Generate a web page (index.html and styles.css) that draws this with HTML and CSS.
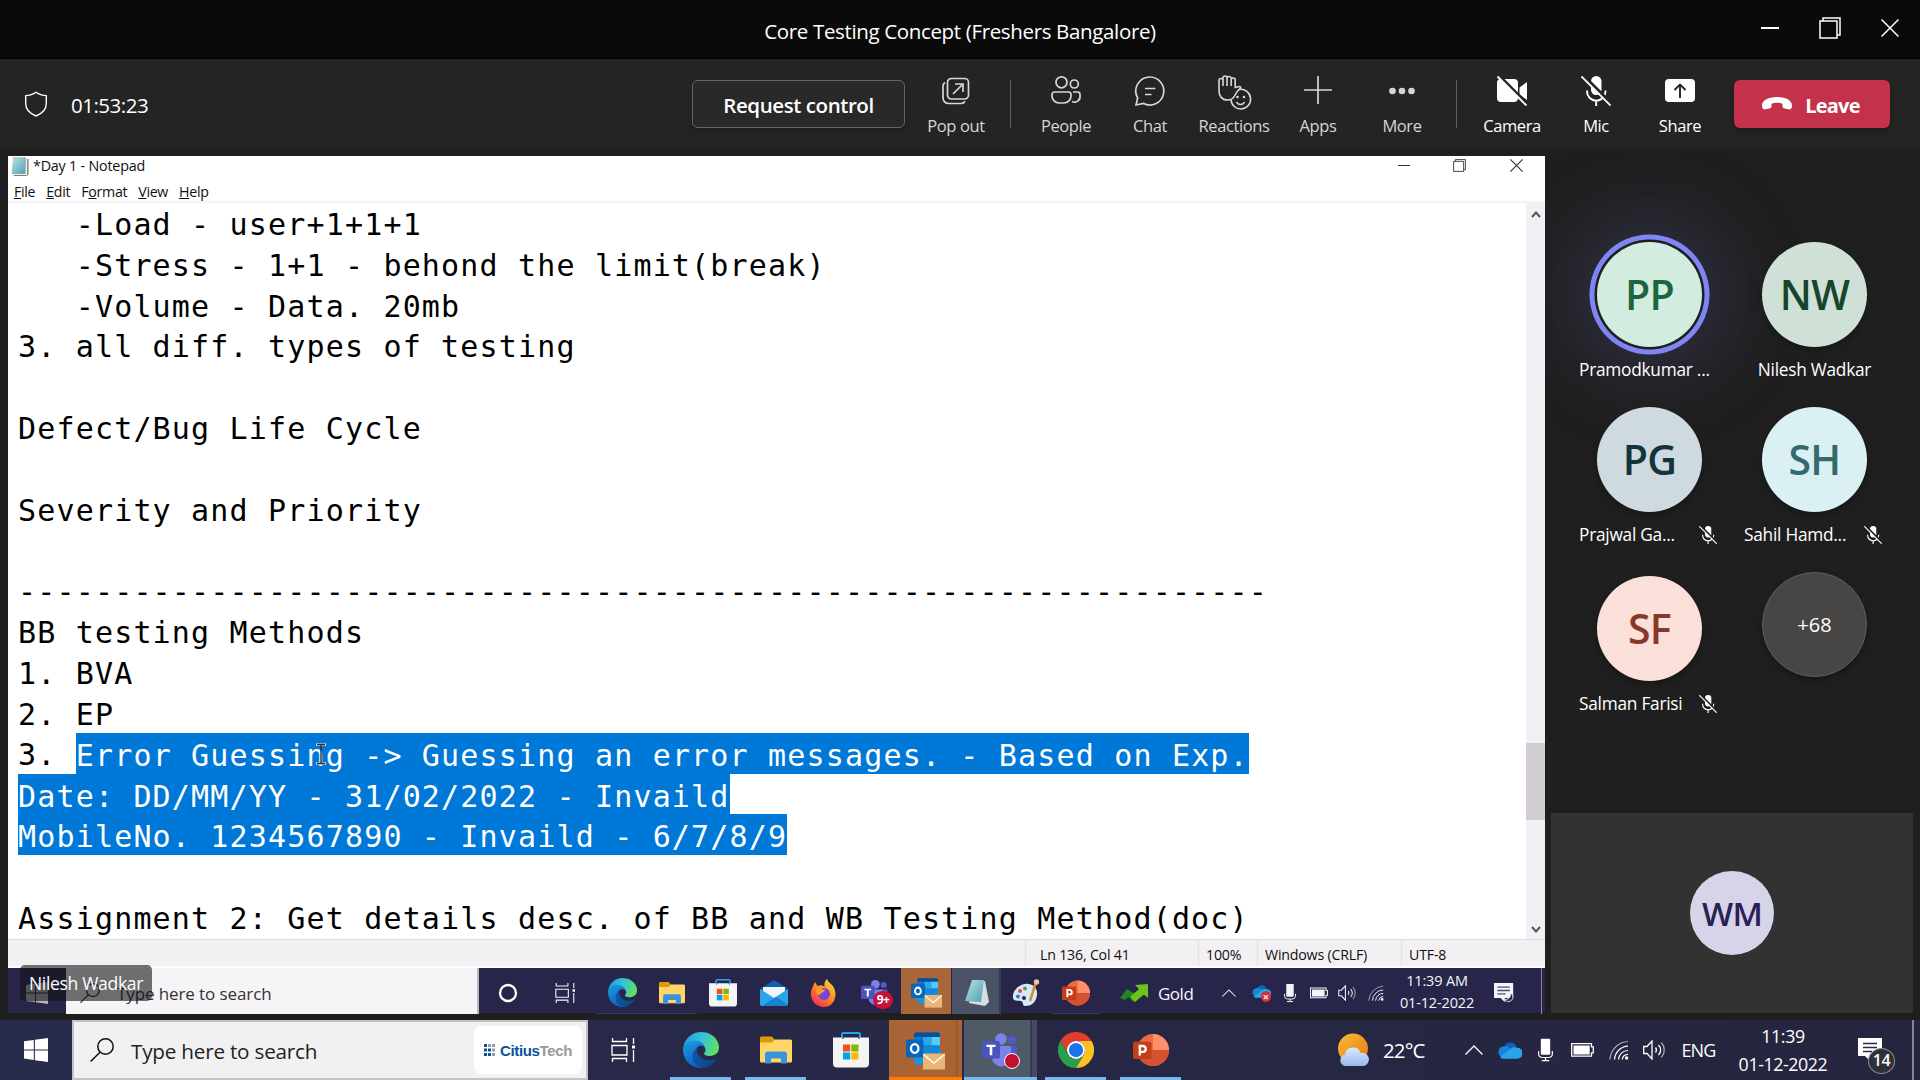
FILE: index.html
```html
<!DOCTYPE html>
<html lang="en">
<head>
<meta charset="utf-8">
<title>Core Testing Concept (Freshers Bangalore)</title>
<link rel="stylesheet" href="styles.css">
</head>
<body>
<svg class="defs" aria-hidden="true">
  <defs>
    <linearGradient id="g-edge-top" x1="0" y1="0.3" x2="1" y2="0.6"><stop offset="0" stop-color="#1f9fe0"/><stop offset=".5" stop-color="#36c5d6"/><stop offset="1" stop-color="#62e05a"/></linearGradient>
    <linearGradient id="g-edge-mid" x1="0" y1="0" x2="0.4" y2="1"><stop offset="0" stop-color="#1ea0e6"/><stop offset="1" stop-color="#0b62c0"/></linearGradient>
    <linearGradient id="g-edge-low" x1="0" y1="0" x2="1" y2="1"><stop offset="0" stop-color="#0f5bb0"/><stop offset="1" stop-color="#0b4687"/></linearGradient>
    <linearGradient id="g-sun" x1="0" y1="0" x2="1" y2="1"><stop offset="0" stop-color="#f6bf35"/><stop offset="1" stop-color="#ee7414"/></linearGradient>
    <linearGradient id="g-cloud" x1="0" y1="0" x2="0" y2="1"><stop offset="0" stop-color="#dbe8fb"/><stop offset="1" stop-color="#97b9f0"/></linearGradient>
    <linearGradient id="g-fox" x1="0.9" y1="0" x2="0.2" y2="1"><stop offset="0" stop-color="#ffdd3c"/><stop offset=".5" stop-color="#ff8a1e"/><stop offset="1" stop-color="#f0265c"/></linearGradient>
    <linearGradient id="g-note" x1="0" y1="0" x2="1" y2="1"><stop offset="0" stop-color="#b9e3ea"/><stop offset="1" stop-color="#4f9fae"/></linearGradient>
  </defs>
  <symbol id="edge" viewBox="0 0 256 256">
    <path fill="url(#g-edge-low)" d="M231 190.5c-3.4 1.8-6.9 3.4-10.5 4.7a101.1 101.1 0 0 1-35.5 6.4c-46.8 0-87.5-32.2-87.5-73.5a31.5 31.5 0 0 1 16.4-27.3c-42.3 1.8-53.2 45.9-53.2 71.7 0 73 67.3 80.5 81.8 80.5 7.8 0 19.6-2.3 26.6-4.5l1.3-.4a128.3 128.3 0 0 0 66.6-52.8 4 4 0 0 0-6-5.8z"/>
    <path fill="url(#g-edge-mid)" d="M105.7 241.5a79.2 79.2 0 0 1-22.7-21.3 80.7 80.7 0 0 1 29.5-120c3.1-1.5 8.5-4.1 15.6-4a32.4 32.4 0 0 1 25.7 13 31.9 31.9 0 0 1 6.3 18.7c0-.2 24.5-79.6-80-79.6-43.9 0-80 41.7-80 78.2a130.2 130.2 0 0 0 12.1 56 128 128 0 0 0 156.4 67 75.5 75.5 0 0 1-62.8-8z"/>
    <path fill="url(#g-edge-top)" d="M152.3 148.9c-.8 1-3.3 2.5-3.3 5.6 0 2.6 1.7 5.2 4.8 7.3 14.4 10 41.5 8.7 41.5 8.7 10.7 0 21.1-2.9 30.3-8.3A61.4 61.4 0 0 0 256 109.1c.3-22.4-8-37.3-11.3-44C223.5 23.9 177.7 0 128 0A128 128 0 0 0 0 126.2c.5-36.5 36.8-66 80-66 3.5 0 23.5.3 42 10 16.3 8.6 24.9 19 30.8 29.2 6.2 10.7 7.3 24.1 7.3 29.5 0 5.3-2.7 13.3-7.8 19.9z"/>
  </symbol>
  <symbol id="explorer" viewBox="0 0 32 27">
    <path fill="#dd9a09" d="M0 1.500a1.500 1.500 0 0 1 1.500-1.500H12l2.500 3V8H0z"/>
    <path fill="#ffd567" d="M0 6h12l2.500-3H30.500A1.500 1.500 0 0 1 32 4.500v20a1.500 1.500 0 0 1-1.500 1.500h-29A1.500 1.500 0 0 1 0 24.500z"/>
    <path fill="#3a94dc" d="M5 27V18a3 3 0 0 1 3-3H24a3 3 0 0 1 3 3v9h-6v-5H11v5z"/>
  </symbol>
  <symbol id="store" viewBox="0 0 36 36">
    <path fill="none" stroke="#1fa8f0" stroke-width="1.900" d="M9 7V2.500A1.500 1.500 0 0 1 10.500 1h15A1.500 1.500 0 0 1 27 2.500V7"/>
    <path fill="#f4f4f4" d="M0 5.500H9V7h1.500V5.500h15V7H27V5.500h9V31.500a4 4 0 0 1-4 4H4a4 4 0 0 1-4-4z"/>
    <path fill="#f25022" d="M10 12.500h7.200v7H10z"/><path fill="#7fba00" d="M18.300 12.500h7.200v7h-7.200z"/>
    <path fill="#00a4ef" d="M10 20.500h7.200v7H10z"/><path fill="#ffb900" d="M18.300 20.500h7.200v7h-7.200z"/>
  </symbol>
  <symbol id="outlook" viewBox="0 0 39 38">
    <rect x="8" y="1" width="26" height="23" rx="2" fill="#0f78d0"/>
    <path fill="#0a4f96" d="M10 1h22a2 2 0 0 1 2 2v2.500H8V3a2 2 0 0 1 2-2z"/>
    <path fill="#29a8ea" d="M17 5.500h8.500V14H17z"/><path fill="#54cdf6" d="M25.500 5.500H34V14h-8.500z"/>
    <path fill="#1388d8" d="M17 14h17v9H17z"/>
    <path fill="#1b94e0" d="M8 20l13 8 14-9v12a2 2 0 0 1-2 2H10a2 2 0 0 1-2-2z"/>
    <rect x="0" y="8" width="17.500" height="18" rx="1.800" fill="#0a66bb"/>
    <ellipse cx="8.700" cy="17" rx="3.700" ry="4.300" fill="none" stroke="#fff" stroke-width="2.300"/>
    <path fill="#e9b677" d="M17 22h22v16H17z"/><path fill="none" stroke="#fff" stroke-width="1.400" d="M17.500 23l10.500 8.500L38.500 23"/>
  </symbol>
  <symbol id="teams" viewBox="0 0 37 35">
    <circle cx="19" cy="6" r="5.800" fill="#7b83eb"/><circle cx="30" cy="7" r="4" fill="#5059c9"/>
    <path fill="#5059c9" d="M25 13h8.500A1.500 1.500 0 0 1 35 14.500V23a6 6 0 0 1-10 4z"/>
    <path fill="#7b83eb" d="M10 13h17.500A1.500 1.500 0 0 1 29 14.500V24a9.500 9.500 0 0 1-19 0z"/>
    <rect y="8" width="18" height="17.500" rx="1.800" fill="#4b53bc"/>
    <path fill="#fff" d="M4.500 11.800h9v2.200h-3.200v8.200H7.700V14H4.500z"/>
  </symbol>
  <symbol id="ppt" viewBox="0 0 36 32">
    <circle cx="20" cy="16" r="16" fill="#ed6c47"/><path fill="#ff8f6b" d="M20 0a16 16 0 0 1 16 16H20z"/><path fill="#d35230" d="M4 16h32a16 16 0 0 1-32 0z"/>
    <rect y="7.500" width="18.500" height="17.500" rx="1.800" fill="#c43e1c"/>
    <path fill="none" stroke="#fff" stroke-width="2.300" d="M6.800 21.500V12h3a2.900 2.900 0 0 1 0 5.900h-3"/>
  </symbol>
  <symbol id="chrome" viewBox="0 0 48 48">
    <path fill="#e33b2e" d="M24 12h20.800A24 24 0 0 0 3.200 12l10.400 18A12 12 0 0 1 24 12z"/>
    <path fill="#fcc31e" d="M34.400 30L24 48a24 24 0 0 0 20.800-36H24a12 12 0 0 1 10.400 18z"/>
    <path fill="#2b9f48" d="M13.600 30L3.200 12A24 24 0 0 0 24 48l10.400-18a12 12 0 0 1-20.800 0z"/>
    <circle cx="24" cy="24" r="12" fill="#fff"/><circle cx="24" cy="24" r="9.500" fill="#1a73e8"/>
  </symbol>
  <symbol id="windows" viewBox="0 0 24 24"><path fill="currentColor" d="M0 3.300L9.800 2v9.400H0zM10.900 1.800L24 0v11.400H10.900zM0 12.500h9.800v9.400L0 20.600zM10.900 12.500H24V24l-13.100-1.800z"/></symbol>
  <symbol id="lens" viewBox="0 0 24 24"><g fill="none" stroke="currentColor" stroke-width="1.500"><circle cx="15.500" cy="8.500" r="7.700"/><path d="M10.200 14L.6 23.500"/></g></symbol>
  <symbol id="taskview" viewBox="0 0 24 24"><g fill="none" stroke="currentColor" stroke-width="1.300"><path d="M1 7.500h15v9.500H1z"/><path d="M1.500 0v3.500h14V0M1.500 24v-3.500h14V24M22.500 0v6M22.500 12v12"/></g><path fill="currentColor" d="M21 7.500h3v3h-3z"/></symbol>
  <symbol id="chevron-up" viewBox="0 0 18 10"><path fill="none" stroke="currentColor" stroke-width="1.300" d="M.5 9.500L9 1l8.500 8.500"/></symbol>
  <symbol id="tray-mic" viewBox="0 0 16 24"><rect x="3" width="10" height="17" rx="1" fill="currentColor"/><path fill="none" stroke="currentColor" stroke-width="1.300" d="M.7 13v3.500A4 4 0 0 0 4.700 20h6.600a4 4 0 0 0 4-3.500V13M8 20v3.400M4 23.400h8"/></symbol>
  <symbol id="battery" viewBox="0 0 23 14"><path fill="none" stroke="currentColor" stroke-width="1.300" d="M.7.7h19.800v3.200h1.800v6h-1.800v3.200H.7z"/><path fill="currentColor" d="M2.500 2.500h16.200v9H2.500z"/></symbol>
  <symbol id="wifi" viewBox="0 0 20 20"><g fill="none" stroke="currentColor" stroke-width="1.200"><path d="M1 19.500A19 19 0 0 1 19 1.500" opacity=".6"/><path d="M5.500 19.500A14 14 0 0 1 19 6.200M9.500 19.500A9.500 9.500 0 0 1 19 10.500M13.200 19.500A6 6 0 0 1 19 14.300"/></g><circle cx="17.600" cy="18" r="1.700" fill="currentColor"/></symbol>
  <symbol id="speaker" viewBox="0 0 22 20"><g fill="none" stroke="currentColor" stroke-width="1.300"><path d="M.7 6.500H4l5-5.500v18l-5-5.500H.7z"/><path d="M12.500 7.500a4 4 0 0 1 0 5M15.500 5a7 7 0 0 1 0 10"/><path d="M18.300 2.500a11 11 0 0 1 0 15" opacity=".6"/></g></symbol>
  <symbol id="cloud" viewBox="0 0 24 18"><path fill="#0a64b8" d="M7 5a6.200 6.200 0 0 1 11.500 1L12 10z"/><path fill="#1485d8" d="M5 5.500c3-1.500 5 0 7.500 1.800L4 16a5.500 5.500 0 0 1 1-10.500z"/><path fill="#28a4ea" d="M12 8c3-2.300 6-1.800 7.500-1.200a5.500 5.500 0 0 1-.5 11H5a5 5 0 0 1-3-1.500z"/></symbol>
  <symbol id="note-bubble" viewBox="0 0 24 24"><path fill="currentColor" d="M0 0h24v18H13v6l-6-6H0z"/><path stroke="#27284a" stroke-width="1.500" d="M5 5.500h14M5 9.500h14M5 13.500h9"/></symbol>
  <symbol id="mic-off" viewBox="0 0 30 30">
    <rect x="10" y="0" width="10.500" height="19" rx="5.200" fill="currentColor"/>
    <path fill="none" stroke="currentColor" stroke-width="1.900" d="M6 14.500v1a9 9 0 0 0 18.500 0v-1M15.200 24.500V30"/>
    <path stroke="var(--cut)" stroke-width="3" d="M1.500-1.500L31.500 28.500"/><path stroke="currentColor" stroke-width="1.900" d="M.5.500l29 29"/>
  </symbol>
  <symbol id="restore" viewBox="0 0 22 22"><path fill="none" stroke="currentColor" stroke-width="1.500" d="M1 4h17v17H1zM4 4V1h17v17h-3"/></symbol>
  <symbol id="close" viewBox="0 0 18 18"><path stroke="currentColor" stroke-width="1.500" d="M.5.500l17 17M17.500.500l-17 17"/></symbol>
</svg>

<header class="titlebar">
  <h1 class="titlebar-text">Core Testing Concept (Freshers Bangalore)</h1>
  <div class="titlebar-buttons">
    <span class="dash"></span>
    <svg class="i-restore"><use href="#restore"/></svg>
    <svg class="i-close"><use href="#close"/></svg>
  </div>
</header>

<nav class="toolbar">
  <div class="timer">
    <svg class="shield" viewBox="0 0 24 26"><path fill="none" stroke="#fff" stroke-width="1.400" d="M12 1.200c3 2.300 6.500 3.300 10.300 3.400v8c0 6-3.600 9.900-10.300 12.400C5.300 22.500 1.700 18.600 1.700 12.600v-8C5.500 4.500 9 3.500 12 1.200z"/></svg>
    <span class="timer-text">01:53:23</span>
  </div>
  <button class="request">Request control</button>
  <div class="tool popout">
    <svg viewBox="0 0 30 30"><g fill="none" stroke="currentColor" stroke-width="1.700"><rect x="6.500" y="2.500" width="21" height="20.500" rx="4"/><path d="M4 6.500A4.500 4.500 0 0 0 2 10V22a5.500 5.500 0 0 0 5.500 5.500H20a4.500 4.500 0 0 0 4-2.200M12 18l9.500-9.500M14 8h8v8"/></g></svg>
    <span>Pop out</span>
  </div>
  <span class="rule"></span>
  <div class="tool">
    <svg viewBox="0 0 30 30"><g fill="none" stroke="currentColor" stroke-width="1.700"><circle cx="10.500" cy="6.300" r="5.500"/><circle cx="23.300" cy="8" r="4"/><path d="M3.500 16h14a2.500 2.500 0 0 1 2.500 2.500v1.500a7 7 0 0 1-7 7H8a7 7 0 0 1-7-7v-1.500A2.500 2.500 0 0 1 3.500 16zM22 16h4.500a2.500 2.500 0 0 1 2.500 2.500V20a5.500 5.500 0 0 1-8 5.500"/></g></svg>
    <span>People</span>
  </div>
  <div class="tool">
    <svg viewBox="0 0 30 30"><g fill="none" stroke="currentColor" stroke-width="1.700"><path d="M15 1a14 14 0 1 1-6.500 26.500L1 29l1.700-7A14 14 0 0 1 15 1zM10 12.500h10.500M10 18.500h6.500"/></g></svg>
    <span>Chat</span>
  </div>
  <div class="tool wide-icon">
    <svg viewBox="0 0 34 34"><g fill="none" stroke="currentColor" stroke-width="1.600"><path d="M2 12V6.500a2 2 0 0 1 4 0M6 12V4a2 2 0 0 1 4 0v8M10 4a2.200 2.200 0 0 1 4.200 0v8M14.200 6a2 2 0 0 1 4 0v7.500l4-1c1.500 0 2 1.300.8 2.200-2.500 2-4 4-5.500 7.300-1.500 3-4 4-7 4C5 26 2 22 2 17v-5"/><path d="M22 15.500a9.800 9.800 0 1 1-8 10"/><path d="M19.500 28a4.500 4.500 0 0 0 8 0"/></g><circle cx="20.500" cy="23" r="1.300" fill="currentColor"/><circle cx="27" cy="23" r="1.300" fill="currentColor"/></svg>
    <span>Reactions</span>
  </div>
  <div class="tool">
    <svg viewBox="0 0 30 30"><path stroke="currentColor" stroke-width="1.700" d="M15 0v28M1 14h28"/></svg>
    <span>Apps</span>
  </div>
  <div class="tool">
    <svg viewBox="0 0 30 30"><g fill="currentColor"><circle cx="5.500" cy="15" r="3.300"/><circle cx="15" cy="15" r="3.300"/><circle cx="24.500" cy="15" r="3.300"/></g></svg>
    <span>More</span>
  </div>
  <span class="rule rule-devices"></span>
  <div class="tool bright">
    <svg viewBox="0 0 30 30"><path fill="currentColor" d="M4 3h13a4 4 0 0 1 4 4v15a4 4 0 0 1-4 4H4a4 4 0 0 1-4-4V7a4 4 0 0 1 4-4zM22.500 11.500L30 6v18l-7.500-5.500z"/><path stroke="#242424" stroke-width="3" d="M2-.5L32 29.500"/><path stroke="currentColor" stroke-width="1.900" d="M.5.500l29 29"/></svg>
    <span>Camera</span>
  </div>
  <div class="tool bright">
    <svg><use href="#mic-off"/></svg>
    <span>Mic</span>
  </div>
  <div class="tool bright">
    <svg viewBox="0 0 30 30"><rect x="0" y="3" width="30" height="23" rx="4" fill="currentColor"/><path fill="none" stroke="#242424" stroke-width="1.900" d="M15 22V9M9.500 14L15 8.500l5.500 5.500"/></svg>
    <span>Share</span>
  </div>
  <button class="leave">
    <svg viewBox="0 0 30 13"><path fill="currentColor" d="M15 0c9 0 15 3.500 15 8.500 0 3.200-1.500 4.200-3.700 3.800l-3.500-.7c-1.600-.3-2.300-1-2.300-2.500V6.700c-3.500-1.200-7.500-1.200-11 0v2.400c0 1.500-.7 2.200-2.300 2.500l-3.500.7C1.500 12.700 0 11.700 0 8.500 0 3.500 6 0 15 0z"/></svg>
    <span>Leave</span>
  </button>
</nav>

<main class="stage">
  <section class="shared">
    <div class="np-title">
      <svg class="np-icon" viewBox="0 0 19 20"><path fill="#8a7d68" d="M3 2h15.500v17L16 20H3z"/><path fill="#f4f4f0" d="M3 1.500h14V19H3z"/><path fill="url(#g-note)" d="M2 1h14l-.8 17H.8z"/><path stroke="#5f7f86" stroke-dasharray="1 1" d="M2 .7h14"/></svg>
      <span class="np-name">*Day 1 - Notepad</span>
      <div class="np-buttons">
        <span class="dash"></span>
        <svg class="i-restore"><use href="#restore"/></svg>
        <svg class="i-close"><use href="#close"/></svg>
      </div>
    </div>
    <div class="np-menu"><span><u>F</u>ile</span><span><u>E</u>dit</span><span>F<u>o</u>rmat</span><span><u>V</u>iew</span><span><u>H</u>elp</span></div>
    <div class="np-body">
<pre class="np-text">   -Load - user+1+1+1
   -Stress - 1+1 - behond the limit(break)
   -Volume - Data. 20mb
3. all diff. types of testing

Defect/Bug Life Cycle

Severity and Priority

-----------------------------------------------------------------
BB testing Methods
1. BVA
2. EP
3. <mark>Error Guessing -&gt; Guessing an error messages. - Based on Exp.</mark>
<mark>Date: DD/MM/YY - 31/02/2022 - Invaild</mark>
<mark>MobileNo. 1234567890 - Invaild - 6/7/8/9</mark>

Assignment 2: Get details desc. of BB and WB Testing Method(doc)</pre>
      <svg class="ibeam" viewBox="0 0 12 22"><path fill="none" stroke="#e9d8c8" stroke-width="2.600" d="M1 1.500h10M1 20.500h10"/><path fill="none" stroke="#2b3038" stroke-width="1.400" d="M6 1v20M2 1.500h8M2 20.500h8"/></svg>
      <div class="np-scroll">
        <svg viewBox="0 0 10 7"><path fill="none" stroke="#555" stroke-width="2" d="M1 6l4-4.500L9 6"/></svg>
        <span class="np-thumb"></span>
        <svg viewBox="0 0 10 7"><path fill="none" stroke="#555" stroke-width="2" d="M1 1l4 4.500L9 1"/></svg>
      </div>
    </div>
    <div class="np-status"><span>Ln 136, Col 41</span><span>100%</span><span>Windows (CRLF)</span><span>UTF-8</span></div>
    <div class="bar2">
      <span><svg class="s22 dim"><use href="#windows"/></svg></span>
      <div class="bar2-search"><svg><use href="#lens"/></svg><span>Type here to search</span></div>
      <span><svg class="s20" viewBox="0 0 20 20"><circle cx="10" cy="10" r="8" fill="none" stroke="#fff" stroke-width="2.300"/></svg></span>
      <span><svg class="s20"><use href="#taskview"/></svg></span>
      <span></span>
      <span class="open"><svg class="s29"><use href="#edge"/></svg></span>
      <span class="open"><svg class="s26"><use href="#explorer"/></svg></span>
      <span><svg class="s28"><use href="#store"/></svg></span>
      <span><svg class="s28" viewBox="0 0 28 26"><path fill="#0f5fb0" d="M14 0l14 9v8H0V9z"/><path fill="#f0f4f8" d="M3 7h22v8l-11 6L3 15z"/><path fill="#2aa5ea" d="M0 9l14 9 14-9v15a2 2 0 0 1-2 2H2a2 2 0 0 1-2-2z"/><path fill="#1683d2" d="M2 26l14-9 12 7.500-1.500 1.500z"/></svg></span>
      <span><svg class="s28" viewBox="0 0 28 28"><path fill="url(#g-fox)" d="M17 0c1.500 4 5 5 6.500 8 5 9 0 20-9.500 20C4 28-1.500 18 2 9.500L5 3l2.500 4C10 5.500 13 6 14.500 8c-.5-3 0-6 2.500-8z"/><circle cx="14" cy="15" r="6" fill="#7a43d8"/><path fill="#ff9a20" d="M6 9c5-1 5 2 9 2-1 3-4 2-5 5-3 0-5-3-4-7z"/></svg></span>
      <span class="teams2"><svg class="s28"><use href="#teams"/></svg><b>9+</b></span>
      <span class="orange"><svg class="s31"><use href="#outlook"/></svg></span>
      <span class="active2"><svg class="s28" viewBox="0 0 28 28"><path fill="#d9dde0" d="M10 2h13l4 21-4 4-16-3z"/><path fill="url(#g-note)" d="M10 1h12l-3 22-16-1z"/></svg></span>
      <span><svg class="s28" viewBox="0 0 28 28"><path fill="#d7e8f6" d="M13 5C20 4 26 9 25 16c-1 8-6 11-12 11-3 0-1-4-4-5-4-1-7 1-8-3C0 12 6 6 13 5z"/><path stroke="#d58c3a" stroke-width="2.500" d="M24 3L18 22"/><circle cx="24.500" cy="3" r="2.700" fill="#e8c894"/><circle cx="8" cy="12" r="2" fill="#e04a3a"/><circle cx="13" cy="9.500" r="2" fill="#49a64a"/><circle cx="6" cy="17.500" r="2" fill="#2c7cd8"/><circle cx="12" cy="19" r="2" fill="#27284a"/></svg></span>
      <span class="open"><svg class="s28"><use href="#ppt"/></svg></span>
      <div class="gold"><svg viewBox="0 0 28 18"><path fill="#25851f" d="M0 14L7 5l7 4 4 5-5 4-4-5-4 3z"/><path fill="#6fc41c" d="M10 13L19 5l-4-4 13-1v14l-4-3.500-9 7.500z"/></svg><span>Gold</span></div>
      <span><svg class="w14"><use href="#chevron-up"/></svg></span>
      <span class="cloud2"><svg><use href="#cloud"/></svg><i>×</i></span>
      <span><svg class="w12"><use href="#tray-mic"/></svg></span>
      <span><svg class="w18"><use href="#battery"/></svg></span>
      <span><svg class="w18"><use href="#speaker"/></svg></span>
      <span><svg class="w16"><use href="#wifi"/></svg></span>
      <div class="clock2"><span>11:39 AM</span><span>01-12-2022</span></div>
      <span><svg class="s20" viewBox="0 0 24 24"><path fill="#f4f4fa" d="M0 0h23v18H13v5l-5-5H0z"/><path stroke="#4a4b72" stroke-width="1.600" d="M4 5h15M4 9h15M4 13h10"/><path fill="#27284a" stroke="#f4f4fa" d="M20 12a5.500 5.500 0 1 1-7.500 7.500c4 1.500 8-2.500 7.500-7.500z"/></svg></span>
      <span class="edge-line"></span>
    </div>
    <div class="presenter">Nilesh Wadkar</div>
  </section>

  <aside class="side">
    <div class="people">
      <figure class="person speaking"><div class="avatar pp">PP</div><figcaption><span>Pramodkumar ...</span></figcaption></figure>
      <figure class="person centered"><div class="avatar nw">NW</div><figcaption><span>Nilesh Wadkar</span></figcaption></figure>
      <figure class="person"><div class="avatar pg">PG</div><figcaption><span>Prajwal Ga...</span><svg><use href="#mic-off"/></svg></figcaption></figure>
      <figure class="person"><div class="avatar sh">SH</div><figcaption><span>Sahil Hamd...</span><svg><use href="#mic-off"/></svg></figcaption></figure>
      <figure class="person last"><div class="avatar sf">SF</div><figcaption><span>Salman Farisi</span><svg><use href="#mic-off"/></svg></figcaption></figure>
      <figure class="person"><div class="avatar more">+68</div></figure>
    </div>
    <div class="self"><div class="avatar wm">WM</div></div>
  </aside>
</main>

<footer class="taskbar">
  <span class="start"><svg class="s24"><use href="#windows"/></svg></span>
  <div class="search">
    <svg><use href="#lens"/></svg><span class="search-text">Type here to search</span>
    <div class="citius">
      <svg viewBox="0 0 11 12"><g fill="#0b5197"><path d="M0 0h3v3H0zM0 4.500h3v3H0zM0 9h3v3H0zM4 4.500h3v3H4zM4 9h3v3H4z"/></g><g fill="#9a9da0"><path d="M4 0h3v3H4zM8 0h3v3H8zM8 4.500h3v3H8zM8 9h3v3H8z"/></g></svg>
      <span>Citius<em>Tech</em></span>
    </div>
  </div>
  <span class="tview"><svg class="s24"><use href="#taskview"/></svg></span>
  <span class="app run"><svg class="s36"><use href="#edge"/></svg></span>
  <span class="app run"><svg class="s32"><use href="#explorer"/></svg></span>
  <span class="app"><svg class="s36"><use href="#store"/></svg></span>
  <span class="app alert"><svg class="s39"><use href="#outlook"/></svg></span>
  <span class="app active"><svg class="s37"><use href="#teams"/></svg><b class="rec"></b></span>
  <span class="app run"><svg class="s36"><use href="#chrome"/></svg></span>
  <span class="app run"><svg class="s36"><use href="#ppt"/></svg></span>
  <div class="tray">
    <span><svg class="weather" viewBox="0 0 34 34"><circle cx="16" cy="15.500" r="15" fill="url(#g-sun)"/><path fill="url(#g-cloud)" d="M9 33a5.800 5.800 0 0 1-1-11.500 8 8 0 0 1 15.500-1.500A6.600 6.600 0 0 1 27 33z"/></svg></span>
    <span class="temp">22°C</span>
    <span><svg class="w18"><use href="#chevron-up"/></svg></span>
    <span><svg class="s24"><use href="#cloud"/></svg></span>
    <span><svg class="w15"><use href="#tray-mic"/></svg></span>
    <span><svg class="w23"><use href="#battery"/></svg></span>
    <span><svg class="w20"><use href="#wifi"/></svg></span>
    <span><svg class="w22"><use href="#speaker"/></svg></span>
    <span class="lang">ENG</span>
    <div class="clock"><span>11:39</span><span>01-12-2022</span></div>
    <span class="notif"><svg class="s24"><use href="#note-bubble"/></svg><b>14</b></span>
    <span class="edge-line"></span>
  </div>
</footer>
</body>
</html>
```
FILE: styles.css
```css
* { box-sizing: border-box; }
body {
  margin: 0; width: 1920px; height: 1080px; overflow: hidden;
  display: flex; flex-direction: column;
  background: #1f1f1f; color: #fff;
  font-family: "Open Sans", "Noto Sans", sans-serif;
}
svg { display: block; flex: none; overflow: visible; }
.defs { width: 0; height: 0; }
button { font: inherit; color: inherit; border: 0; padding: 0; }

/* Meeting window title */
.titlebar { height: 59px; flex: none; display: grid; grid-template-columns: 1fr auto 1fr; align-items: center; background: #0a0a0a; border-bottom: 1px solid #000; }
.titlebar-text { grid-column: 2; margin: 3px 0 0; font-size: 20.500px; font-weight: 400; letter-spacing: -.35px; line-height: 28px; white-space: nowrap; }
.titlebar-buttons { justify-self: end; display: flex; align-items: center; padding-right: 21px; margin-top: -3px; }
.dash { width: 18px; height: 2px; background: currentColor; }
.titlebar-buttons .i-restore { width: 22px; height: 22px; margin: 0 40px; }
.titlebar-buttons .i-close { width: 18px; height: 18px; }

/* Meeting toolbar */
.toolbar { height: 90px; flex: none; display: flex; align-items: center; padding: 0 30px 0 24px; background: #242424; }
.timer { display: flex; align-items: center; margin-right: auto; gap: 23px; }
.shield { width: 24px; height: 26px; }
.timer-text { font-size: 20.500px; letter-spacing: -.5px; margin-top: 1px; }
.request { width: 213px; height: 48px; border: 1px solid #666; border-radius: 6px; background: #292929; font-size: 20.500px; font-weight: 600; letter-spacing: -.42px; padding-top: 3px; margin-top: -1px; box-shadow: 0 3px 5px rgba(0,0,0,.2); }
.popout { margin-left: 9px; }
.rule { width: 1px; height: 48px; margin: 0 13px 0 12px; background: #616161; }
.tool { width: 84px; height: 64px; margin-top: 6px; display: flex; flex-direction: column; align-items: center; color: #d6d6d6; font-size: 16.500px; line-height: 22px; letter-spacing: -.4px; --cut: #242424; }
.tool svg { width: 30px; height: 30px; margin: 1px 0 9px; }
.wide-icon svg { width: 34px; height: 34px; margin: -1px 0 7px; }
.bright { color: #fff; }
.leave { width: 156px; height: 48px; margin: -1px 0 0 12px; border-radius: 6px; background: #c4314b; display: flex; align-items: center; justify-content: center; gap: 13px; padding-right: 2px; font-size: 20px; font-weight: 700; letter-spacing: -.8px; box-shadow: 0 3px 5px rgba(0,0,0,.25); }
.leave svg { width: 30px; height: 13px; }
.leave span { padding-top: 3px; }

.stage { height: 871px; flex: none; display: flex; gap: 6px; padding: 7px 7px 7px 8px; }

/* Shared screen */
.shared { position: relative; width: 1537px; display: flex; flex-direction: column; background: #fff; color: #111; }
.np-title { height: 23px; display: flex; align-items: flex-start; padding-left: 3px; font-size: 14.300px; letter-spacing: -.2px; }
.np-icon { width: 18px; height: 19px; margin-top: 1px; }
.np-name { margin: 0 auto 0 4px; line-height: 19px; }
.np-buttons { display: flex; align-items: center; height: 19px; padding-right: 22px; color: #333; }
.np-buttons .dash { width: 12px; height: 1px; }
.np-buttons .i-restore { width: 13px; height: 13px; margin: 0 44px 0 43px; }
.np-buttons .i-close { width: 13px; height: 13px; }
.np-menu { height: 24px; display: flex; gap: 11px; padding: 1px 0 0 6px; border-bottom: 2px solid #f4f4f8; font-size: 14.200px; line-height: 24px; letter-spacing: -.3px; }
.np-body { position: relative; height: 736px; display: flex; justify-content: space-between; overflow: hidden; }
.np-text { margin: 0; padding: 2px 0 0 10px; font: 30px/40.800px "DejaVu Sans Mono", monospace; letter-spacing: 1.170px; color: #000; }
.np-text mark { background: #0078d7; color: #fff; padding: 4.600px 0 1.300px; }
.ibeam { position: absolute; left: 307px; top: 540px; width: 12px; height: 22px; }
.np-scroll { width: 19px; height: 736px; display: flex; flex-direction: column; align-items: center; background: #f3f0f5; padding: 8px 0 6px; }
.np-scroll svg { width: 10px; height: 7px; }
.np-thumb { width: 19px; height: 77px; margin: 525px 0 auto; background: #d1cdd2; }
.np-status { height: 29px; display: grid; grid-template-columns: 173px 59px 144px 144px; justify-content: end; border-top: 1px solid #dedce2; border-bottom: 2px solid #fdfdfd; background: #f2f0f3; font-size: 14.200px; line-height: 29px; letter-spacing: -.2px; }
.np-status span { height: 26px; border-left: 1px solid #e2e0e6; padding-left: 7px; white-space: nowrap; }
.np-status span:first-child { padding-left: 14px; }

.bar2 { height: 45px; display: grid; grid-template-columns: 58px 413px 58px 56px 4px 50px 50px 51px 51px 50px 52px 50px 50px 50px 50px 110px 36px 28px 30px 28px 28px 30px 92px 42px 21px; background: #27264a; color: #f4f4fa; align-items: stretch; }
.bar2 > span { display: flex; align-items: center; justify-content: center; padding-top: 3px; }
.bar2-search { display: flex; align-items: center; padding-left: 14px; background: #f7f4f8; border-right: 2px solid #bbb; color: #333; font-size: 17px; letter-spacing: -.1px; }
.bar2-search svg { width: 20px; height: 20px; margin: 4px 17px 0 0; color: #222; }
.bar2-search span { margin-top: 5px; }
.dim { color: #b4b4bc; }
.s20 { width: 20px; height: 20px; } .s22 { width: 22px; height: 22px; } .s24 { width: 24px; height: 24px; }
.s26 { width: 26px; height: 26px; } .s28 { width: 28px; height: 28px; } .s29 { width: 29px; height: 29px; }
.s31 { width: 31px; height: 31px; } .s32 { width: 32px; height: 32px; } .s36 { width: 36px; height: 36px; }
.s37 { width: 37px; height: 37px; } .s39 { width: 39px; height: 39px; }
.w12 { width: 12px; height: 20px; } .w14 { width: 14px; height: 8px; } .w15 { width: 15px; height: 24px; }
.w16 { width: 16px; height: 16px; } .w18 { width: 18px; height: 16px; } .w20 { width: 20px; height: 20px; }
.w22 { width: 22px; height: 20px; } .w23 { width: 23px; height: 14px; }
.bar2 .open { box-shadow: inset 0 -1px #16496e; }
.bar2 .orange { background: #a96638; }
.bar2 .active2 { background: #4b5268; border-left: 1px solid #27264a; border-right: 2px solid #35395a; }
.teams2 { position: relative; }
.teams2 b { position: absolute; left: 24px; top: 23px; width: 20px; height: 18px; border-radius: 9px; background: #c4123a; color: #fff; font-size: 12px; line-height: 17px; text-align: center; letter-spacing: -.5px; }
.gold { display: flex; align-items: center; gap: 10px; padding: 4px 0 0 19px; font-size: 17px; letter-spacing: -.5px; }
.gold svg { width: 28px; height: 18px; }
.cloud2 { position: relative; }
.cloud2 svg { width: 19px; height: 14px; margin-top: -3px; }
.cloud2 i { position: absolute; left: 14px; top: 23px; width: 10px; height: 11px; border-radius: 50%; background: #d5303c; font: 700 11px/11px "Open Sans", sans-serif; text-align: center; }
.clock2 { display: flex; flex-direction: column; align-items: center; padding-top: 2px; font-size: 14.500px; line-height: 22px; letter-spacing: -.15px; }
.edge-line { border-left: 1px solid #85869c; }
.bar2 .edge-line { margin-left: 16px; }
.presenter { position: absolute; left: 12px; top: 809px; width: 132px; height: 36px; border-radius: 5px; background: rgba(18,18,22,.6); color: #fff; font-size: 17.500px; line-height: 36px; text-align: center; letter-spacing: -.3px; white-space: nowrap; }

/* Participants */
.side { width: 362px; display: flex; flex-direction: column; justify-content: space-between; }
.people { display: grid; grid-template-columns: 165px 165px; grid-auto-rows: 165px; padding: 86px 0 0 16px; --cut: #1f1f1f; }
.person { margin: 0; display: flex; flex-direction: column; align-items: center; }
.last { padding-top: 4px; }
.avatar { width: 105px; height: 105px; flex: none; border-radius: 50%; display: flex; align-items: center; justify-content: center; font-size: 41px; font-weight: 600; letter-spacing: -.8px; line-height: 1; box-shadow: 0 3px 6px rgba(0,0,0,.3); }
.pp { background: #d2ecdf; color: #1b6640; }
.speaking .pp { box-shadow: 0 0 0 2.500px #1f1f1f, 0 0 0 7.500px #7f85f5, 0 0 90px 12px rgba(105,105,190,.36); }
.nw { background: #cfe0d7; color: #17452c; }
.pg { background: #cfd9e0; color: #14333d; }
.sh { background: #daf0f3; color: #336a6e; }
.sf { background: #fbdfd9; color: #86392b; }
.more { background: #484644; border: 1px solid #605e5c; color: #fff; font-size: 20px; font-weight: 400; letter-spacing: 0; }
.person figcaption { position: relative; width: 141px; margin-top: 11px; display: flex; justify-content: space-between; align-items: center; font-size: 17.300px; line-height: 24px; letter-spacing: -.25px; white-space: nowrap; }
.centered figcaption { justify-content: center; }
.person figcaption svg { width: 18px; height: 18px; margin: -1px 3px 0 0; }
.self { height: 200px; background: #323232; display: flex; align-items: center; justify-content: center; }
.wm { width: 84px; height: 84px; background: #d6d4e9; color: #2a2155; font-size: 33px; box-shadow: none; }

/* Local taskbar */
.taskbar { height: 60px; flex: none; display: flex; align-items: stretch; background: linear-gradient(90deg, #292b4d, #25253f); }
.start, .tview, .app, .tray > span { display: flex; align-items: center; justify-content: center; }
.start { width: 72px; }
.search { width: 516px; display: flex; align-items: center; background: #f1f1f1; border: 2px solid #c3c3c3; padding: 0 4px 0 16px; color: #222; }
.search > svg { width: 24px; height: 24px; color: #111; }
.search-text { font-size: 20.700px; letter-spacing: -.22px; margin: 1px auto 0 17px; }
.citius { width: 108px; height: 48px; border-radius: 8px; background: #fff; display: flex; align-items: center; justify-content: center; gap: 5px; }
.citius svg { width: 11px; height: 12px; }
.citius span { font: 700 15px/20px "Liberation Sans", sans-serif; color: #0b5197; letter-spacing: -.35px; padding-top: 1px; }
.citius em { font-style: normal; color: #97999c; }
.tview { width: 70px; margin-right: 5px; }
.app { position: relative; width: 75px; }
.run { background: linear-gradient(#76b9ed, #76b9ed) center bottom / 61px 3px no-repeat; }
.alert { background: linear-gradient(#ff7a00, #ff7a00) 0 bottom / 100% 3px no-repeat, linear-gradient(90deg, #a96334 67px, #8f5128 67px, #a96334 69px); border-left: 1px solid #27284a; border-right: 1px solid #27284a; }
.active { background: linear-gradient(#76b9ed, #76b9ed) 0 bottom / 100% 3px no-repeat, linear-gradient(90deg, #4e5a66 66px, #343850 66px, #343850 68px, #454b60 68px); border-left: 1px solid #27284a; border-right: 1px solid #27284a; }
.rec { position: absolute; left: 40px; top: 33px; width: 16px; height: 16px; border-radius: 50%; border: 1.500px solid #fff; background: #c4102f; }
.tray { margin-left: auto; display: grid; grid-template-columns: 52px 72px 44px 28px 42px 32px 42px 28px 63px 104px 70px 15px; }
.weather { width: 34px; height: 34px; }
.tray > .temp { justify-content: flex-start; padding-left: 3px; font-size: 20.500px; letter-spacing: -.9px; }
.tray > .lang { font-size: 18px; letter-spacing: -.9px; padding-right: 2px; }
.clock { display: flex; flex-direction: column; align-items: center; padding-top: 2px; font-size: 17.800px; line-height: 28px; letter-spacing: -.4px; }
.notif { position: relative; }
.notif b { position: absolute; left: 33px; top: 28px; width: 27px; height: 26px; border-radius: 50%; border: 1px solid #8d8d99; background: #303038; font-size: 16px; font-weight: 600; line-height: 23px; text-align: center; letter-spacing: -.5px; }
.tray > .edge-line { border-left: 2px solid #85869c; margin-left: 7px; }
```
